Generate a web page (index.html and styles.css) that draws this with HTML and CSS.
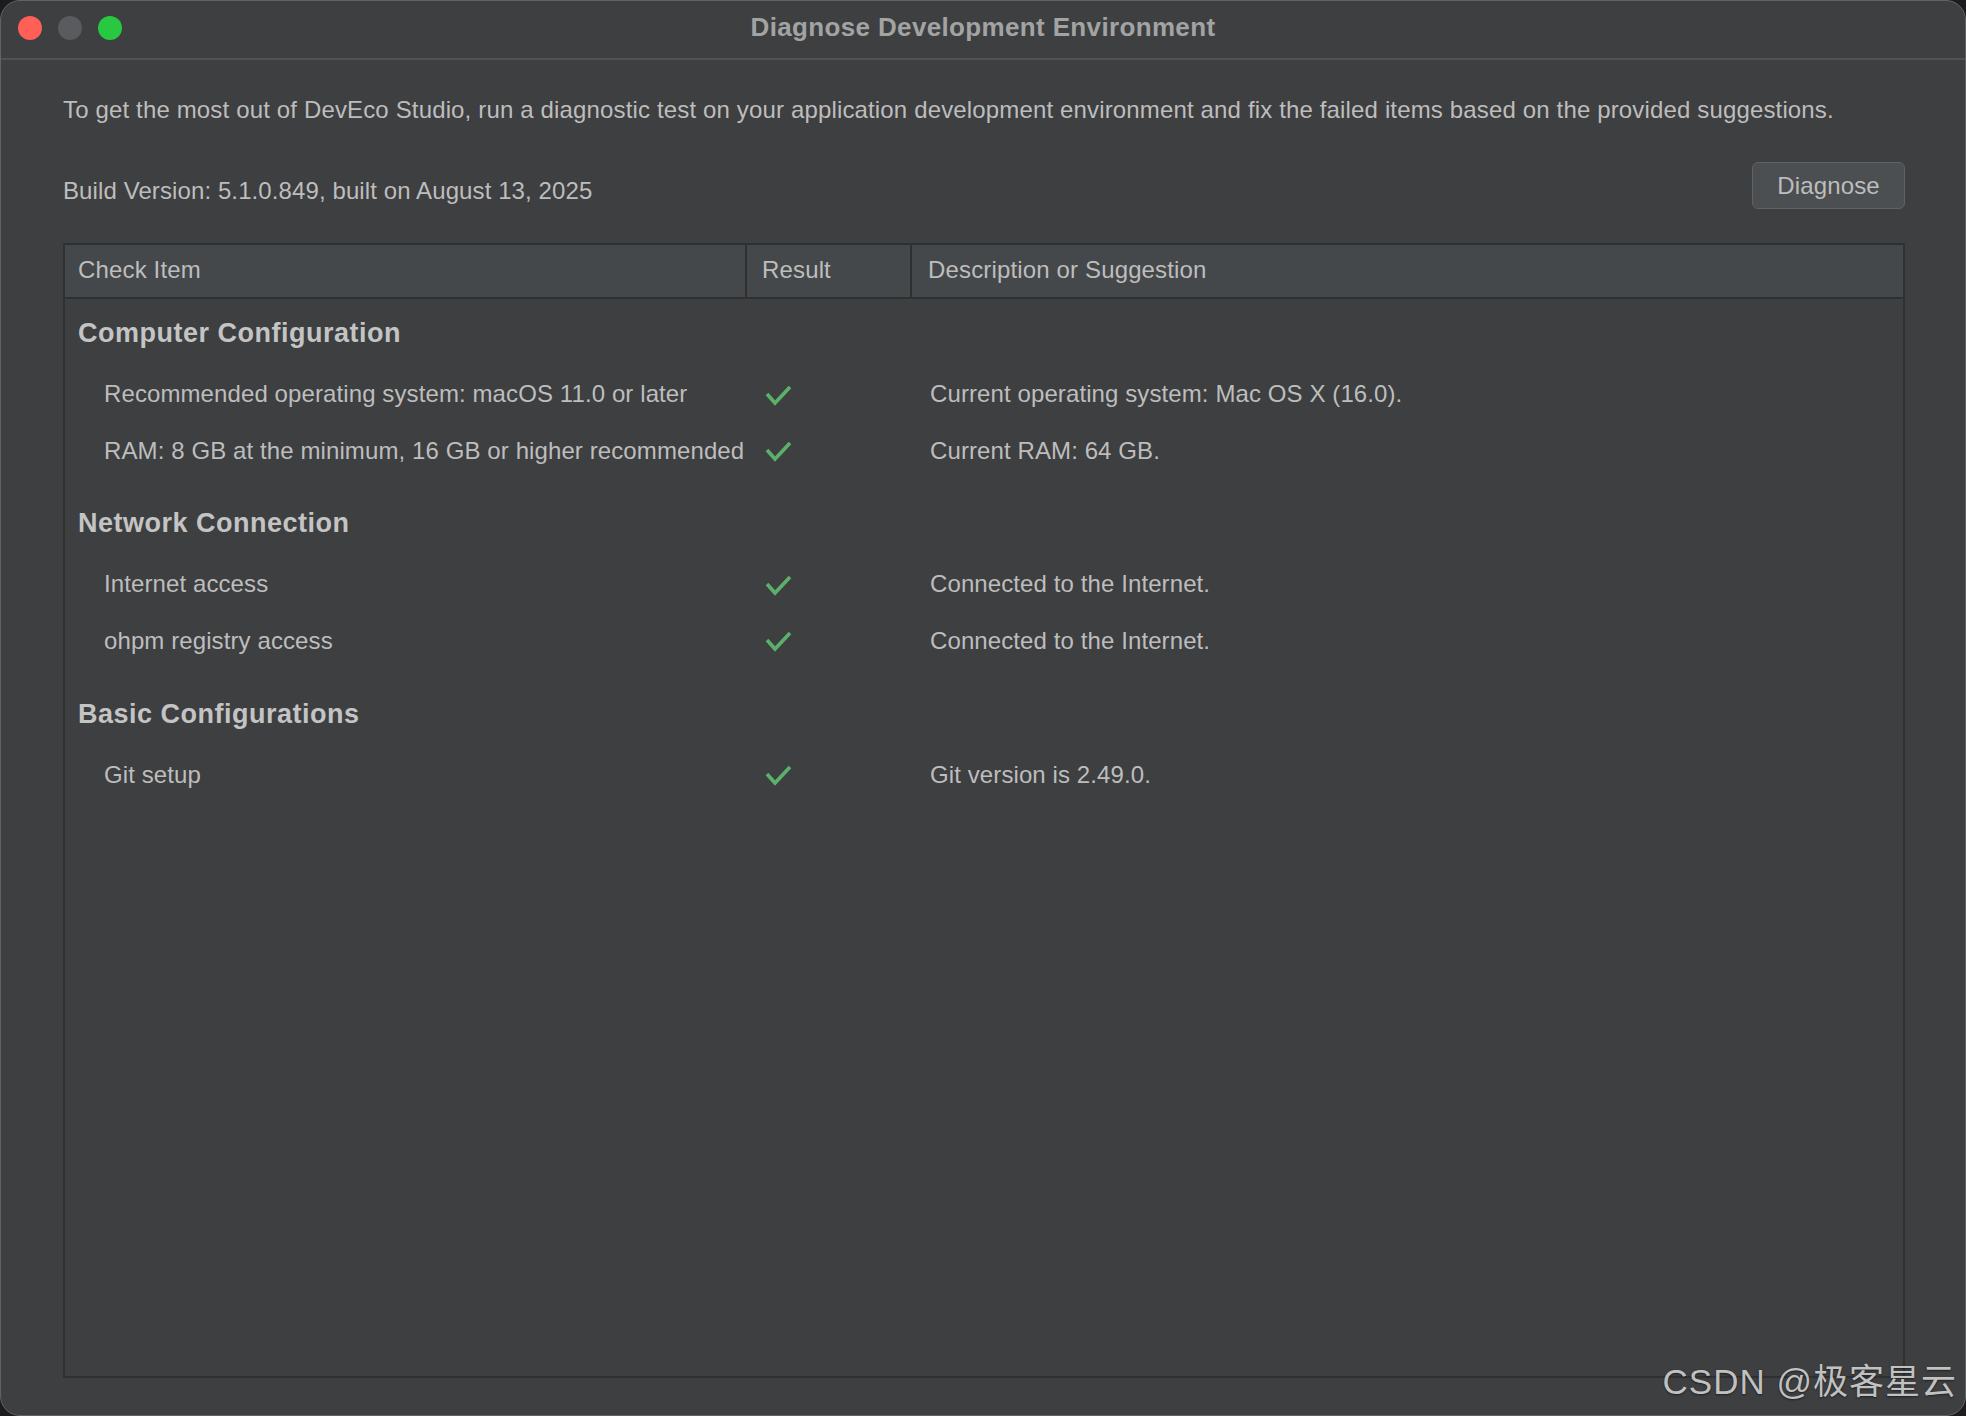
FILE: index.html
```html
<!DOCTYPE html>
<html lang="en">
<head>
<meta charset="utf-8">
<title>Diagnose Development Environment</title>
<link rel="stylesheet" href="styles.css">
</head>
<body>
<div class="window">
  <div class="titlebar">
    <div class="lights">
      <span class="light red"></span>
      <span class="light gray"></span>
      <span class="light green"></span>
    </div>
    <div class="title">Diagnose Development Environment</div>
    <div></div>
  </div>
  <div class="content">
    <p class="intro">To get the most out of DevEco Studio, run a diagnostic test on your application development environment and fix the failed items based on the provided suggestions.</p>
    <div class="build-row">
      <span class="build">Build Version: 5.1.0.849, built on August 13, 2025</span>
      <button class="btn">Diagnose</button>
    </div>
    <div class="table">
      <div class="thead">
        <div class="th c1">Check Item</div>
        <div class="th c2">Result</div>
        <div class="th c3">Description or Suggestion</div>
      </div>
      <div class="tbody">
        <div class="group">
          <div class="group-title">Computer Configuration</div>
          <div class="row">
            <div class="item">Recommended operating system: macOS 11.0 or later</div>
            <div class="res"><svg class="check" viewBox="0 0 28 22" width="28" height="22"><path d="M3 9 L11 18 L26 2"/></svg></div>
            <div class="desc">Current operating system: Mac OS X (16.0).</div>
          </div>
          <div class="row">
            <div class="item">RAM: 8 GB at the minimum, 16 GB or higher recommended</div>
            <div class="res"><svg class="check" viewBox="0 0 28 22" width="28" height="22"><path d="M3 9 L11 18 L26 2"/></svg></div>
            <div class="desc">Current RAM: 64 GB.</div>
          </div>
        </div>
        <div class="group">
          <div class="group-title">Network Connection</div>
          <div class="row">
            <div class="item">Internet access</div>
            <div class="res"><svg class="check" viewBox="0 0 28 22" width="28" height="22"><path d="M3 9 L11 18 L26 2"/></svg></div>
            <div class="desc">Connected to the Internet.</div>
          </div>
          <div class="row">
            <div class="item">ohpm registry access</div>
            <div class="res"><svg class="check" viewBox="0 0 28 22" width="28" height="22"><path d="M3 9 L11 18 L26 2"/></svg></div>
            <div class="desc">Connected to the Internet.</div>
          </div>
        </div>
        <div class="group">
          <div class="group-title">Basic Configurations</div>
          <div class="row">
            <div class="item">Git setup</div>
            <div class="res"><svg class="check" viewBox="0 0 28 22" width="28" height="22"><path d="M3 9 L11 18 L26 2"/></svg></div>
            <div class="desc">Git version is 2.49.0.</div>
          </div>
        </div>
      </div>
    </div>
  </div>
  <div class="watermark">CSDN @极客星云</div>
</div>
</body>
</html>
```
FILE: styles.css
```css
* { box-sizing: border-box; }
html, body {
  margin: 0;
  padding: 0;
  background: #1c1c1e;
}
body {
  width: 1966px;
  height: 1416px;
  overflow: hidden;
  font-family: "Liberation Sans", Arial, "Noto Sans CJK SC", sans-serif;
  color: #bdbdbd;
}
.window {
  position: relative;
  width: 1966px;
  height: 1416px;
  background: #3d3f41;
  border: 1px solid #626365;
  border-radius: 20px;
  overflow: hidden;
  display: flex;
  flex-direction: column;
}
.titlebar {
  height: 59px;
  flex: none;
  display: grid;
  grid-template-columns: 1fr auto 1fr;
  align-items: start;
  border-bottom: 2px solid #505254;
}
.lights {
  display: flex;
  gap: 16px;
  padding-left: 17px;
  margin-top: 15px;
}
.light {
  width: 24px;
  height: 24px;
  border-radius: 50%;
  display: block;
}
.red { background: #fe5f57; }
.gray { background: #5a5b5e; }
.green { background: #28c840; }
.title {
  font-weight: bold;
  font-size: 26px;
  line-height: 30px;
  letter-spacing: 0.35px;
  margin-top: 11px;
  color: #a3a3a3;
}
.content {
  flex: 1;
  display: flex;
  flex-direction: column;
  padding: 0 60px 37px 62px;
}
.intro {
  margin: 35px 0 0 0;
  font-size: 24px;
  letter-spacing: 0.15px;
  line-height: 30px;
  white-space: nowrap;
}
.build-row {
  margin-top: 37px;
  display: flex;
  justify-content: space-between;
  align-items: flex-start;
}
.build {
  margin-top: 14px;
  font-size: 24px;
  letter-spacing: 0.1px;
  line-height: 30px;
}
.btn {
  width: 153px;
  height: 47px;
  background: #4b4f51;
  border: 1px solid #5f6365;
  border-radius: 6px;
  color: #bdbdbd;
  font-family: "Liberation Sans", Arial, sans-serif;
  font-size: 24px;
  letter-spacing: 0.15px;
  padding: 0;
}
.table {
  margin-top: 34px;
  flex: 1;
  border: 2px solid #2f3032;
  display: flex;
  flex-direction: column;
}
.thead {
  display: grid;
  grid-template-columns: 682px 165px 1fr;
  background: #45484a;
  border-bottom: 2px solid #2f3032;
  height: 54px;
}
.th {
  font-size: 24px;
  letter-spacing: 0.15px;
  line-height: 50px;
  padding-left: 13px;
}
.th.c1, .th.c2 { border-right: 2px solid #2f3032; }
.th.c2 { padding-left: 15px; }
.th.c3 { padding-left: 16px; }
.tbody { flex: 1; }
.group + .group { margin-top: 10.5px; }
.group-title {
  font-weight: bold;
  font-size: 27px;
  letter-spacing: 0.5px;
  line-height: 35px;
  padding: 17px 0 15px 13px;
  color: #c4c4c4;
}
.row {
  display: grid;
  grid-template-columns: 682px 165px 1fr;
  height: 56.4px;
  align-items: center;
  font-size: 24px;
  letter-spacing: 0.1px;
}
.item { padding-left: 39px; white-space: nowrap; }
.res { padding-left: 17px; display: flex; align-items: center; }
.desc { padding-left: 18px; }
.check {
  display: block;
  fill: none;
  stroke: #5cb16a;
  stroke-width: 3.6;
  margin-top: 3px;
}
.watermark {
  position: absolute;
  right: 8px;
  bottom: 16px;
  font-family: "Liberation Sans", "Noto Sans CJK SC", sans-serif;
  font-size: 35px;
  line-height: 35px;
  letter-spacing: 1px;
  color: rgba(222, 222, 222, 0.85);
  text-shadow: 0 1px 2px rgba(0, 0, 0, 0.5);
}
```
